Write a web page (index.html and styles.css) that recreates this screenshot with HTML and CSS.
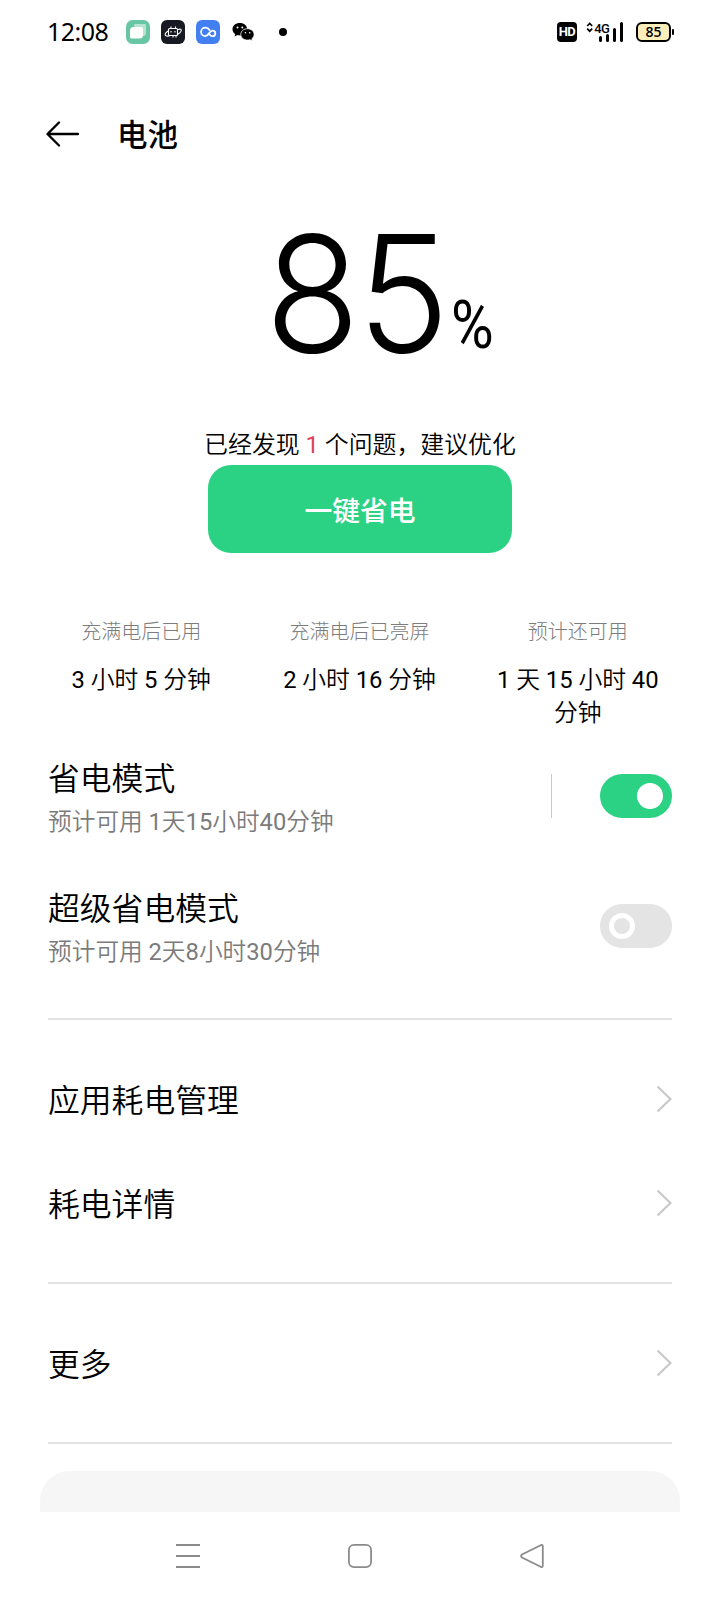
FILE: index.html
```html
<!DOCTYPE html>
<html lang="zh-CN">
<head>
<meta charset="utf-8">
<title>电池</title>
<link rel="stylesheet" href="styles.css">
</head>
<body>
<div class="screen">
  <div class="status">
    <span class="clock">12:08</span>
    <div class="notices">
      <svg width="24" height="24" viewBox="0 0 24 24"><rect width="24" height="24" rx="6.500" fill="#68c6a4"/><path d="M8 5Q8 4 9 4H19Q20 4 20 5V13Q20 16 17 16H8Z" fill="#b4e3d2"/><path d="M7.500 7H15.500Q17 7 17 8.500V15Q17 18.500 13.500 18.500H5.500Q4 18.500 4 17V10.500Q4 7 7.500 7Z" fill="#fff"/></svg>
      <svg width="24" height="24" viewBox="0 0 24 24"><rect width="24" height="24" rx="6" fill="#171923"/><g fill="none" stroke="#fff" stroke-width="1.100"><rect x="7.500" y="8.500" width="9" height="7" rx="1"/><path d="M10 8V6.500M14.500 8V6.500M7 11Q3 14 4.500 15.500Q6 16.500 9 15.800M17 9.500Q20.500 8.500 20.300 10.500Q20 12.500 16.500 14.500M12 15.500V17.500M15 15V17.500M10 11V12.500M14 11V12.500"/></g></svg>
      <svg width="24" height="24" viewBox="0 0 24 24"><rect width="24" height="24" rx="6" fill="#427ff0"/><path d="M13.500 10C12.500 8.300 11 7.700 9.300 7.700A4.200 4.200 0 0 0 9.300 16.100C13 16.100 13 10.700 16.600 10.700A2.700 2.700 0 0 1 16.600 16.100C15 16.100 14 15.200 13.300 14.200" fill="none" stroke="#fff" stroke-width="1.800" stroke-linecap="round"/></svg>
      <svg width="24" height="24" viewBox="0 0 24 24"><path d="M9 3C4.500 3 1.500 5.700 1.500 9.200C1.500 11.200 2.600 13 4.200 14.100L3.600 16.500L6.500 15.100Q7.700 15.500 9 15.500C13.500 15.500 16.200 12.600 16.200 9.200C16.200 5.700 13 3 9 3Z"/><path d="M16.500 8.700C12.500 8.700 9.800 11.200 9.800 14.400C9.800 17.600 12.700 20.100 16.500 20.100Q17.800 20.100 18.900 19.700L21.400 21L20.800 18.800C22.300 17.700 23.100 16.100 23.100 14.400C23.100 11.200 20.200 8.700 16.500 8.700Z" stroke="#fff" stroke-width=".8"/><g fill="#fff"><circle cx="6.500" cy="7.500" r="1"/><circle cx="11.300" cy="7.500" r="1"/><circle cx="14.400" cy="12.700" r=".8"/><circle cx="18.700" cy="12.700" r=".8"/></g></svg>
    </div>
    <span class="dot"></span>
    <span class="hd">HD</span>
    <svg class="signal" width="40" height="24" viewBox="0 0 40 24"><path d="M3.200 6L5.700 3.500L8.200 6M3.200 8.700L5.700 11.200L8.200 8.700" fill="none" stroke="#000" stroke-width="1.700"/><path d="M16.500 17.500V20.500M23.500 15.500V20.500M30.500 9.500V20.500M37.500 3.500V20.500" stroke="#000" stroke-width="3" stroke-linecap="round"/><text class="net" x="10.300" y="12.500">4G</text></svg>
    <div class="battery"><span class="level">85</span></div>
  </div>

  <header class="header">
    <svg width="34" height="28" viewBox="0 0 34 28"><path d="M32 14H2M13 2.500L1.500 14L13 25.500" fill="none" stroke="#000" stroke-width="2.300" stroke-linecap="round" stroke-linejoin="round"/></svg>
    <h1 class="title">电池</h1>
  </header>

  <div class="charge"><span class="charge-num">85</span><span class="charge-unit">%</span></div>
  <p class="notice">已经发现 <span class="num count">1</span> 个问题，建议优化</p>
  <button class="optimize">一键省电</button>

  <div class="stats">
    <div class="stat"><div class="stat-label">充满电后已用</div><div class="stat-value"><span class="num">3</span> 小时 <span class="num">5</span> 分钟</div></div>
    <div class="stat"><div class="stat-label">充满电后已亮屏</div><div class="stat-value"><span class="num">2</span> 小时 <span class="num">16</span> 分钟</div></div>
    <div class="stat"><div class="stat-label">预计还可用</div><div class="stat-value"><span class="num">1</span> 天 <span class="num">15</span> 小时 <span class="num">40</span> 分钟</div></div>
  </div>

  <div class="mode">
    <div class="mode-text"><div class="label">省电模式</div><div class="sub">预计可用 <span class="num">1</span>天<span class="num">15</span>小时<span class="num">40</span>分钟</div></div>
    <span class="split"></span>
    <span class="switch on"><span class="knob"></span></span>
  </div>
  <div class="mode">
    <div class="mode-text"><div class="label">超级省电模式</div><div class="sub">预计可用 <span class="num">2</span>天<span class="num">8</span>小时<span class="num">30</span>分钟</div></div>
    <span class="switch"><span class="knob"></span></span>
  </div>

  <div class="groups">
    <div class="group">
      <div class="row"><span class="label">应用耗电管理</span><svg class="chevron" width="16" height="28" viewBox="0 0 16 28"><path d="M1.500 1.500L14.500 14L1.500 26.500"/></svg></div>
      <div class="row"><span class="label">耗电详情</span><svg class="chevron" width="16" height="28" viewBox="0 0 16 28"><path d="M1.500 1.500L14.500 14L1.500 26.500"/></svg></div>
    </div>
    <div class="group">
      <div class="row"><span class="label">更多</span><svg class="chevron" width="16" height="28" viewBox="0 0 16 28"><path d="M1.500 1.500L14.500 14L1.500 26.500"/></svg></div>
    </div>
    <div class="group last"></div>
  </div>
  <div class="card"></div>

  <nav class="nav">
    <svg width="24" height="26" viewBox="0 0 24 26"><path d="M0 2H24M0 13H24M0 24H24"/></svg>
    <svg width="24" height="26" viewBox="0 0 24 26"><rect x=".9" y="1.900" width="22.200" height="22.200" rx="5"/></svg>
    <svg width="24" height="26" viewBox="0 0 24 26"><path d="M20.700 2.200L2 11.500Q.2 13 2 14.500L20.700 23.800Q22.800 24.700 22.800 22.500V3.500Q22.800 1.300 20.700 2.200Z"/></svg>
  </nav>
</div>
</body>
</html>
```
FILE: styles.css
```css
* { box-sizing: border-box; }
body {
  margin: 0;
  background: #fff;
  color: #000;
  font-family: Roboto, "Noto Sans CJK SC", sans-serif;
}
.screen {
  width: 720px;
  height: 1600px;
  overflow: hidden;
  display: flex;
  flex-direction: column;
}
.screen > * { flex-shrink: 0; }
.num { font-weight: 400; }

.status {
  height: 64px;
  padding: 0 45px 0 47px;
  display: flex;
  align-items: center;
}
.clock {
  width: 79px;
  margin-top: -2px;
  font: 25px/30px "Noto Sans", sans-serif;
  letter-spacing: -0.5px;
}
.notices { display: flex; gap: 11px; }
.dot {
  width: 8px;
  height: 8px;
  margin-left: 24px;
  border-radius: 50%;
  background: #000;
}
.hd {
  width: 20px;
  height: 20px;
  margin-left: auto;
  border-radius: 4px;
  background: #000;
  color: #fff;
  font-size: 13px;
  font-weight: 700;
  letter-spacing: -0.5px;
  line-height: 20px;
  text-align: center;
}
.signal { margin-left: 7px; }
.net { font: 500 13px Roboto, sans-serif; letter-spacing: -0.7px; }
.battery {
  position: relative;
  width: 35px;
  height: 20px;
  margin: 0 4px 0 12px;
  border: 2px solid #000;
  border-radius: 6px;
  background: #fbeebb;
  font: 600 14px/16px "Open Sans", sans-serif;
  text-align: center;
}
.battery::after {
  content: "";
  position: absolute;
  right: -5px;
  top: 5px;
  width: 2px;
  height: 6px;
  border-radius: 1px;
  background: #000;
}

.header {
  height: 140px;
  padding: 0 46px;
  display: flex;
  align-items: center;
  gap: 37px;
}
.title {
  margin: -3px 0 0;
  font: 500 30.5px/44px "Noto Sans CJK SC", sans-serif;
}

.charge {
  height: 222px;
  padding-left: 265px;
  display: flex;
  align-items: baseline;
}
.charge-num {
  width: 186px;
  font: 350 162px/179px Inter, sans-serif;
  letter-spacing: -3px;
  transform: scaleX(0.96);
  transform-origin: left;
}
.charge-unit {
  font: 67px/80px Roboto, sans-serif;
  transform: translateY(-4px) scaleX(0.87);
  transform-origin: left;
}
.notice {
  margin: 0;
  padding-top: 2px;
  height: 39px;
  font-size: 23.9px;
  font-weight: 350;
  line-height: 34px;
  text-align: center;
}
.count { color: #e04458; }
.optimize {
  width: 304px;
  height: 88px;
  margin: 0 auto;
  border: 0;
  border-radius: 23px;
  background: #2bd284;
  color: #fff;
  font: 500 27.8px/40px "Noto Sans CJK SC", sans-serif;
}

.stats {
  height: 195px;
  padding: 65px 33px 0 32px;
  display: grid;
  grid-template-columns: repeat(3, 1fr);
  text-align: center;
}
.stat { padding: 0 22px; }
.stat-label {
  color: #7c7c7c;
  font-size: 20px;
  font-weight: 300;
  line-height: 28px;
}
.stat-value {
  margin-top: 18px;
  font-size: 23.8px;
  font-weight: 350;
  line-height: 33px;
}

.mode {
  height: 130px;
  padding: 7px 48px 0;
  display: flex;
  align-items: flex-start;
}
.mode-text { flex: 1; }
.label {
  font-size: 31.8px;
  font-weight: 350;
  line-height: 48px;
}
.sub {
  color: #7b7b7b;
  font-size: 23.7px;
  font-weight: 350;
  line-height: 38px;
}
.split {
  width: 1px;
  height: 44px;
  margin: 19px 48px 0 0;
  background: #c8c8c8;
}
.switch {
  width: 72px;
  height: 44px;
  margin-top: 19px;
  padding: 9px;
  display: flex;
  border-radius: 22px;
  background: #e4e4e4;
}
.switch.on { justify-content: flex-end; background: #2bd284; }
.knob {
  width: 26px;
  height: 26px;
  border: 5px solid #fff;
  border-radius: 50%;
}
.on .knob { background: #fff; }

.groups { margin: 10px 48px 0; }
.group {
  padding: 27px 0;
  border-top: 2px solid #e2e2e2;
}
.group.last { padding: 0; }
.row {
  height: 104px;
  display: flex;
  align-items: center;
  justify-content: space-between;
}
.row .label { padding-top: 3px; }
.chevron {
  fill: none;
  stroke: #c9c9c9;
  stroke-width: 2.2;
}
.card {
  height: 41px;
  margin: 27px 40px 0;
  border-radius: 30px 30px 0 0;
  background: #f6f6f6;
}
.nav {
  height: 88px;
  padding: 0 176px;
  display: flex;
  align-items: center;
  justify-content: space-between;
  fill: none;
  stroke: #8b8b8b;
  stroke-width: 1.8;
}
```
